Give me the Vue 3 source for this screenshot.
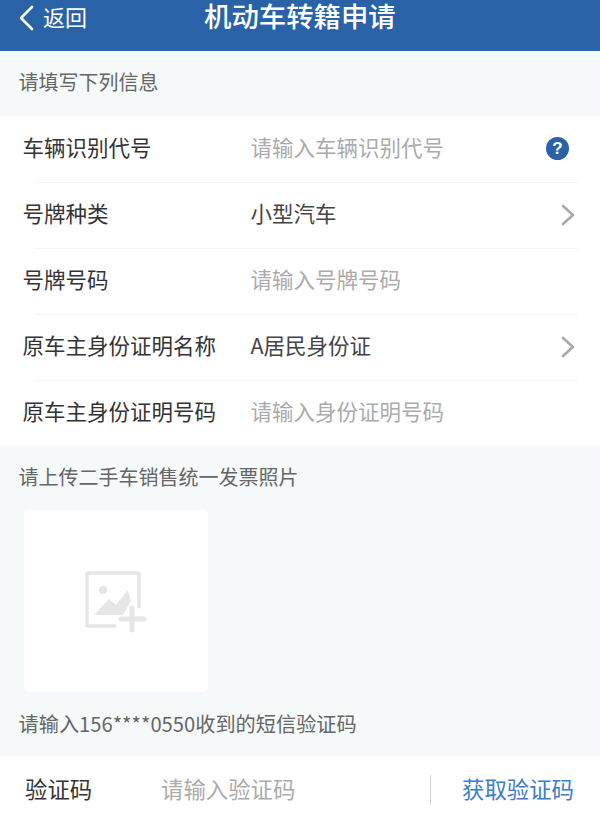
<script setup>
const rows = [
  { label: '车辆识别代号', value: '请输入车辆识别代号', placeholder: true, icon: 'help' },
  { label: '号牌种类', value: '小型汽车', icon: 'chevron' },
  { label: '号牌号码', value: '请输入号牌号码', placeholder: true },
  { label: '原车主身份证明名称', value: 'A居民身份证', icon: 'chevron' },
  { label: '原车主身份证明号码', value: '请输入身份证明号码', placeholder: true }
]
</script>

<template>
  <div class="page">
    <header class="header">
      <div class="back">
        <svg class="back-icon" width="16" height="26" viewBox="0 0 16 26" aria-hidden="true">
          <path d="M14 2 L3 13 L14 24" fill="none" stroke="#fff" stroke-width="2.6" stroke-linecap="round" stroke-linejoin="round" />
        </svg>
        <span class="back-text">返回</span>
      </div>
      <h1 class="title">机动车转籍申请</h1>
    </header>

    <div class="section-label first">请填写下列信息</div>

    <section class="form">
      <div v-for="row in rows" :key="row.label" class="row">
        <span class="row-label">{{ row.label }}</span>
        <span class="row-value" :class="{ placeholder: row.placeholder }">{{ row.value }}</span>
        <span v-if="row.icon === 'help'" class="help">?</span>
        <svg v-else-if="row.icon === 'chevron'" class="chevron" width="14" height="22" viewBox="0 0 14 22" aria-hidden="true">
          <path d="M2 2 L12 11 L2 20" fill="none" stroke="#a9a9a9" stroke-width="2.6" stroke-linecap="round" stroke-linejoin="round" />
        </svg>
      </div>
    </section>

    <div class="section-label second">请上传二手车销售统一发票照片</div>

    <div class="upload">
      <svg width="64" height="62" viewBox="0 0 64 62" aria-hidden="true">
        <path d="M30 55 H3 a1 1 0 0 1 -1 -1 V3 a1 1 0 0 1 1 -1 H53 a1 1 0 0 1 1 1 V36" fill="none" stroke="#e6e6e6" stroke-width="3.4" stroke-linecap="round" />
        <circle cx="18" cy="19" r="4" fill="#e6e6e6" />
        <path d="M9 44 L24 28 L31 34 L43 19 L46 30 L38 44 Z" fill="#e6e6e6" />
        <path d="M36 48 H59 M47 37 V59" fill="none" stroke="#e6e6e6" stroke-width="5" stroke-linecap="round" />
      </svg>
    </div>

    <div class="section-label third">请输入156****0550收到的短信验证码</div>

    <section class="code-bar">
      <span class="code-label">验证码</span>
      <span class="code-input">请输入验证码</span>
      <span class="divider"></span>
      <span class="code-action">获取验证码</span>
    </section>
  </div>
</template>

<style scoped>
.page {
  width: 600px;
  height: 814px;
  overflow: hidden;
  background: #f5f9fa;
  font-family: "Noto Sans CJK SC", "Liberation Sans", sans-serif;
  color: #333;
}
.header {
  height: 51px;
  background: #2a62a7;
  color: #fff;
  display: flex;
  align-items: flex-start;
  box-sizing: border-box;
  padding-left: 18px;
}
.back {
  display: flex;
  align-items: center;
  gap: 9px;
  width: 186px;
  height: 35px;
  font-size: 22px;
  line-height: 30px;
}
.back-text {
  margin-bottom: 4px;
}
.title {
  margin: 0;
  font-family: "Liberation Sans", "Noto Sans CJK SC", sans-serif;
  font-size: 27.4px;
  font-weight: 500;
  line-height: 36px;
}
.section-label {
  color: #666;
  font-size: 20px;
  padding: 0 0 4px 18.5px;
  box-sizing: border-box;
  display: flex;
  align-items: center;
}
.first { height: 65px; }
.form { background: #fff; }
.row {
  height: 66px;
  display: flex;
  align-items: center;
  padding: 0 25px 0 22.5px;
  position: relative;
  font-size: 21.5px;
}
.row + .row::before {
  content: "";
  position: absolute;
  left: 35px;
  right: 22px;
  top: 0;
  border-top: 1px solid #f6f6f6;
}
.row-label {
  width: 228px;
  flex: none;
  color: #333;
  white-space: nowrap;
  margin-bottom: 5px;
}
.row-value {
  flex: 1;
  color: #444;
  white-space: nowrap;
  margin-bottom: 5px;
}
.placeholder { color: #ababab; }
.help {
  width: 23px;
  height: 23px;
  margin: 0 6px 1px 0;
  border-radius: 50%;
  background: #2a62a7;
  color: #fff;
  font: bold 17px/23px "Liberation Sans", sans-serif;
  text-align: center;
}
.second { height: 64px; }
.upload {
  width: 184px;
  height: 182px;
  margin-left: 24px;
  background: #fff;
  border-radius: 5px;
  display: flex;
  align-items: center;
  justify-content: center;
}
.upload svg {
  margin: 2px 0 0 2px;
}
.third {
  height: 64px;
  font-size: 20.2px;
  padding-bottom: 2px;
}
.code-bar {
  height: 58px;
  background: #fff;
  display: flex;
  align-items: center;
  padding-left: 25px;
  font-size: 22.4px;
}
.code-label {
  width: 136px;
  flex: none;
  color: #333;
  margin-top: 5px;
}
.code-input {
  width: 269px;
  flex: none;
  color: #ababab;
  margin-top: 5px;
}
.divider {
  width: 1px;
  height: 30px;
  background: #d2d2d2;
  flex: none;
  margin-top: 10px;
}
.code-action {
  margin-left: 31px;
  margin-top: 5px;
  color: #3a7dc8;
  white-space: nowrap;
}
</style>

<style>
html, body { margin: 0; background: #f5f9fa; }
</style>
